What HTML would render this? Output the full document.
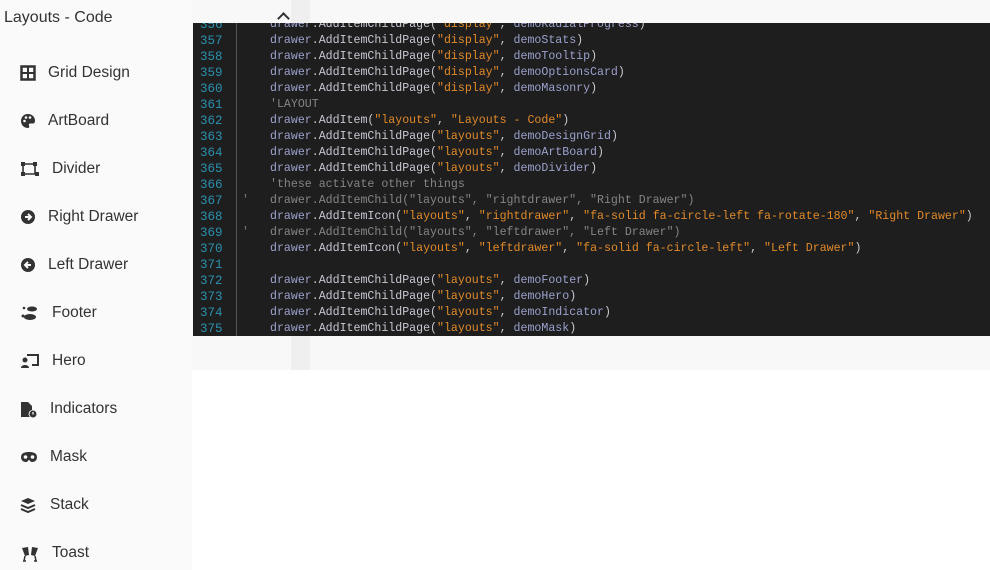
<!DOCTYPE html><html><head><meta charset="utf-8"><style>
body{margin:0;width:990px;height:570px;overflow:hidden;background:#fff;font-family:"Liberation Sans",sans-serif;position:relative}
.side{position:absolute;left:0;top:0;width:192px;height:570px;background:#fafafa}
.top{position:absolute;left:192px;top:0;width:798px;height:370px;background:#f8f8f8}
.strip{position:absolute;left:291px;top:0;width:19px;height:370px;background:#efefef}
.hdr{position:absolute;left:4px;top:9px;font-size:16px;color:#333}
.chev{position:absolute;left:279px;top:14px;width:7px;height:7px;border-left:2px solid #333;border-top:2px solid #333;transform:rotate(45deg);}
.item{position:absolute;left:20px;font-size:15.5px;color:#333;height:20px;line-height:20px}
.item svg{position:absolute;left:0;top:2px}
.item span{position:absolute;white-space:nowrap}
.code{position:absolute;left:193px;top:23px;width:797px;height:313px;background:#1e1e1e;overflow:hidden}
.gut{position:absolute;left:43px;top:0;width:1px;height:313px;background:#555}
.lines{position:absolute;left:0;top:-6px;font-family:"Liberation Mono",monospace;font-size:11.6px;line-height:16px}
.l{height:16px;position:relative}
.n{position:absolute;left:7px;color:#2b91af;font-size:12.5px}
.t{position:absolute;left:77px;color:#c8c8d2;white-space:pre}
.q{position:absolute;left:49px;color:#7a7a7a}
.d{color:#9da0cc}.s{color:#e08a2a}.c{color:#858585}
</style></head><body>
<div class="side"></div><div class="top"></div><div class="strip"></div>
<div class="hdr">Layouts - Code</div><div class="chev"></div>

<div class="item" style="top:63px"><svg width="16" height="16" viewBox="0 0 16 16"><rect x="1.5" y="1.5" width="13" height="13" fill="none" stroke="#333" stroke-width="2.5"/><path d="M8 1v14M1 8h14" stroke="#333" stroke-width="2"/></svg><span style="left:28px">Grid Design</span></div>
<div class="item" style="top:111px"><svg width="16" height="16" viewBox="0 0 16 16"><path d="M8 1C3 1 1 5 1 8c0 4 3 7 7 7 1.5 0 1.5-1.5 1-2.5-.5-1 0-2 1.5-2H13c1.5 0 2-1.5 2-3C15 4 12 1 8 1z" fill="#333"/><circle cx="4.5" cy="8" r="1.3" fill="#fafafa"/><circle cx="6" cy="4.5" r="1.3" fill="#fafafa"/><circle cx="10" cy="4.5" r="1.3" fill="#fafafa"/></svg><span style="left:28px">ArtBoard</span></div>
<div class="item" style="top:159px"><svg width="20" height="16" viewBox="0 0 20 16"><rect x="1" y="1" width="4" height="4" fill="#333"/><rect x="13" y="1" width="4" height="4" fill="#333"/><rect x="1" y="11" width="4" height="4" fill="#333"/><rect x="15" y="11" width="4" height="4" fill="#333"/><path d="M3 3h12M3 3v10M3 13h14M15 3v10" stroke="#333" stroke-width="1.6" fill="none"/></svg><span style="left:32px">Divider</span></div>
<div class="item" style="top:207px"><svg width="16" height="16" viewBox="0 0 16 16"><circle cx="8" cy="8" r="7" fill="#333"/><path d="M5 8h5M8 5l3 3-3 3" stroke="#fafafa" stroke-width="2" fill="none"/></svg><span style="left:28px">Right Drawer</span></div>
<div class="item" style="top:255px"><svg width="16" height="16" viewBox="0 0 16 16"><circle cx="8" cy="8" r="7" fill="#333"/><path d="M11 8H6M8 5L5 8l3 3" stroke="#fafafa" stroke-width="2" fill="none"/></svg><span style="left:28px">Left Drawer</span></div>
<div class="item" style="top:303px"><svg width="20" height="16" viewBox="0 0 20 16"><ellipse cx="12" cy="4" rx="5" ry="2.5" fill="#333"/><ellipse cx="10" cy="12" rx="6" ry="3" fill="#333"/><circle cx="4" cy="3" r="1.3" fill="#333"/><circle cx="3" cy="11" r="1.5" fill="#333"/></svg><span style="left:32px">Footer</span></div>
<div class="item" style="top:351px"><svg width="20" height="16" viewBox="0 0 20 16"><path d="M7 2h11v10h-6" stroke="#333" stroke-width="2" fill="none"/><circle cx="5" cy="7" r="2.5" fill="#333"/><path d="M1 15c0-4 8-4 8 0z" fill="#333"/></svg><span style="left:32px">Hero</span></div>
<div class="item" style="top:399px"><svg width="18" height="18" viewBox="0 0 18 18"><path d="M1 1h7l4 4v4a4 4 0 0 0-2 7H1z" fill="#333"/><circle cx="13" cy="13" r="3.5" fill="#333"/><path d="M13 11v2.5" stroke="#fafafa" stroke-width="1.3"/></svg><span style="left:30px">Indicators</span></div>
<div class="item" style="top:447px"><svg width="18" height="16" viewBox="0 0 18 16"><path d="M1 8c0-4 4-5 8-5s8 1 8 5-3 5-5 5c-2 0-2-2-3-2s-1 2-3 2c-2 0-5-1-5-5z" fill="#333"/><circle cx="5.5" cy="8" r="1.8" fill="#fafafa"/><circle cx="12.5" cy="8" r="1.8" fill="#fafafa"/></svg><span style="left:30px">Mask</span></div>
<div class="item" style="top:495px"><svg width="16" height="16" viewBox="0 0 16 16"><path d="M8 1l7 3-7 3-7-3z" fill="#333"/><path d="M1 8l7 3 7-3M1 12l7 3 7-3" stroke="#333" stroke-width="2" fill="none"/></svg><span style="left:30px">Stack</span></div>
<div class="item" style="top:543px"><svg width="20" height="18" viewBox="0 0 20 18"><path d="M2 3l6-1 1 8-4 1zM18 3l-6-1-1 8 4 1z" fill="#333"/><path d="M5 11l-1 5M3 16h3M15 11l1 5M14 16h3" stroke="#333" stroke-width="1.5"/></svg><span style="left:32px">Toast</span></div>

<div class="code"><div class="gut"></div><div class="lines"><div class="l"><span class="n">356</span><span class="t"><span class="d">drawer</span>.AddItemChildPage(<span class="s">"display"</span>, <span class="d">demoRadialProgress</span>)</span></div><div class="l"><span class="n">357</span><span class="t"><span class="d">drawer</span>.AddItemChildPage(<span class="s">"display"</span>, <span class="d">demoStats</span>)</span></div><div class="l"><span class="n">358</span><span class="t"><span class="d">drawer</span>.AddItemChildPage(<span class="s">"display"</span>, <span class="d">demoTooltip</span>)</span></div><div class="l"><span class="n">359</span><span class="t"><span class="d">drawer</span>.AddItemChildPage(<span class="s">"display"</span>, <span class="d">demoOptionsCard</span>)</span></div><div class="l"><span class="n">360</span><span class="t"><span class="d">drawer</span>.AddItemChildPage(<span class="s">"display"</span>, <span class="d">demoMasonry</span>)</span></div><div class="l"><span class="n">361</span><span class="t c">'LAYOUT</span></div><div class="l"><span class="n">362</span><span class="t"><span class="d">drawer</span>.AddItem(<span class="s">"layouts"</span>, <span class="s">"Layouts - Code"</span>)</span></div><div class="l"><span class="n">363</span><span class="t"><span class="d">drawer</span>.AddItemChildPage(<span class="s">"layouts"</span>, <span class="d">demoDesignGrid</span>)</span></div><div class="l"><span class="n">364</span><span class="t"><span class="d">drawer</span>.AddItemChildPage(<span class="s">"layouts"</span>, <span class="d">demoArtBoard</span>)</span></div><div class="l"><span class="n">365</span><span class="t"><span class="d">drawer</span>.AddItemChildPage(<span class="s">"layouts"</span>, <span class="d">demoDivider</span>)</span></div><div class="l"><span class="n">366</span><span class="t c">'these activate other things</span></div><div class="l"><span class="n">367</span><span class="q">'</span><span class="t c">drawer.AddItemChild("layouts", "rightdrawer", "Right Drawer")</span></div><div class="l"><span class="n">368</span><span class="t"><span class="d">drawer</span>.AddItemIcon(<span class="s">"layouts"</span>, <span class="s">"rightdrawer"</span>, <span class="s">"fa-solid fa-circle-left fa-rotate-180"</span>, <span class="s">"Right Drawer"</span>)</span></div><div class="l"><span class="n">369</span><span class="q">'</span><span class="t c">drawer.AddItemChild("layouts", "leftdrawer", "Left Drawer")</span></div><div class="l"><span class="n">370</span><span class="t"><span class="d">drawer</span>.AddItemIcon(<span class="s">"layouts"</span>, <span class="s">"leftdrawer"</span>, <span class="s">"fa-solid fa-circle-left"</span>, <span class="s">"Left Drawer"</span>)</span></div><div class="l"><span class="n">371</span></div><div class="l"><span class="n">372</span><span class="t"><span class="d">drawer</span>.AddItemChildPage(<span class="s">"layouts"</span>, <span class="d">demoFooter</span>)</span></div><div class="l"><span class="n">373</span><span class="t"><span class="d">drawer</span>.AddItemChildPage(<span class="s">"layouts"</span>, <span class="d">demoHero</span>)</span></div><div class="l"><span class="n">374</span><span class="t"><span class="d">drawer</span>.AddItemChildPage(<span class="s">"layouts"</span>, <span class="d">demoIndicator</span>)</span></div><div class="l"><span class="n">375</span><span class="t"><span class="d">drawer</span>.AddItemChildPage(<span class="s">"layouts"</span>, <span class="d">demoMask</span>)</span></div></div></div>
</body></html>
